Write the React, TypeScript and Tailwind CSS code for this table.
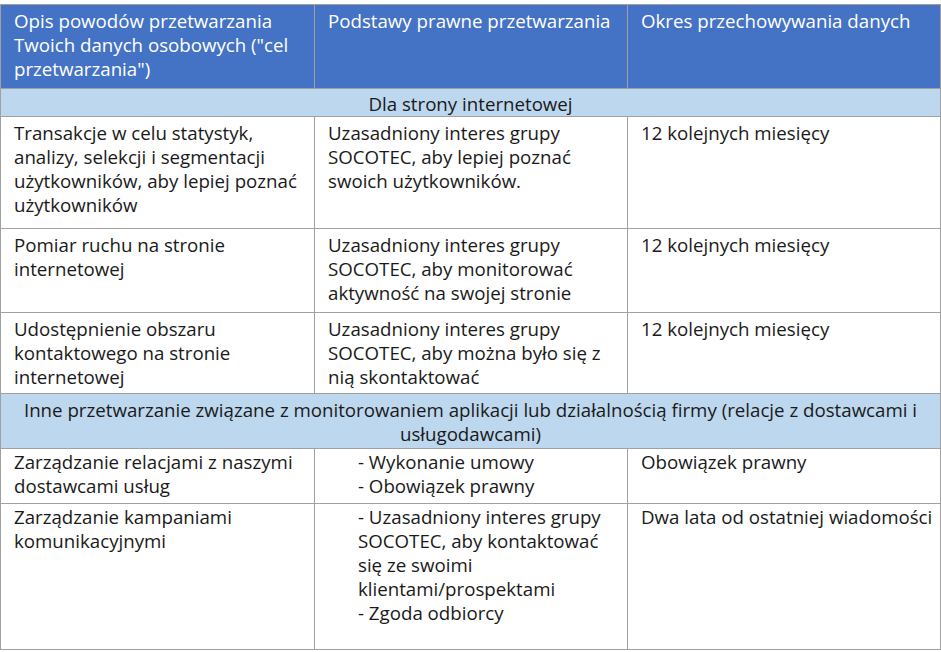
const rows = [
  {
    purpose: ["Transakcje w celu statystyk,", "analizy, selekcji i segmentacji", "użytkowników, aby lepiej poznać", "użytkowników"],
    basis: ["Uzasadniony interes grupy", "SOCOTEC, aby lepiej poznać", "swoich użytkowników."],
    period: ["12 kolejnych miesięcy"],
    h: "h-[112px]",
  },
  {
    purpose: ["Pomiar ruchu na stronie", "internetowej"],
    basis: ["Uzasadniony interes grupy", "SOCOTEC, aby monitorować", "aktywność na swojej stronie"],
    period: ["12 kolejnych miesięcy"],
    h: "h-[84px]",
  },
  {
    purpose: ["Udostępnienie obszaru", "kontaktowego na stronie", "internetowej"],
    basis: ["Uzasadniony interes grupy", "SOCOTEC, aby można było się z", "nią skontaktować"],
    period: ["12 kolejnych miesięcy"],
    h: "h-[81px]",
  },
];

const rows2 = [
  {
    purpose: ["Zarządzanie relacjami z naszymi", "dostawcami usług"],
    basis: ["- Wykonanie umowy", "- Obowiązek prawny"],
    period: ["Obowiązek prawny"],
    h: "h-[55px]",
  },
  {
    purpose: ["Zarządzanie kampaniami", "komunikacyjnymi"],
    basis: ["- Uzasadniony interes grupy", "SOCOTEC, aby kontaktować", "się ze swoimi", "klientami/prospektami", "- Zgoda odbiorcy"],
    period: ["Dwa lata od ostatniej wiadomości"],
    h: "h-[146px]",
  },
];

const Lines = ({ lines }: { lines: string[] }) => (
  <>
    {lines.map((l, i) => (
      <div key={i} className="whitespace-nowrap">{l}</div>
    ))}
  </>
);

const cell = "border border-[#a0a0a0] align-top px-[13px]";

const Row = ({ r, indent }: { r: typeof rows[number]; indent?: boolean }) => (
  <tr className={r.h}>
    <td className={`${cell} ${indent ? "pt-[1px]" : "pt-[4px]"}`}><Lines lines={r.purpose} /></td>
    <td className={`${cell} ${indent ? "pt-[1px] pl-[43px]" : "pt-[4px]"}`}><Lines lines={r.basis} /></td>
    <td className={`${cell} ${indent ? "pt-[1px]" : "pt-[4px]"}`}><Lines lines={r.period} /></td>
  </tr>
);

const App = () => {
  return (
    <div className="w-[941px] h-[652px] bg-white pt-[4px]" style={{ fontFamily: '"Open Sans", "Noto Sans", sans-serif' }}>
      <table className="w-[940px] border-collapse table-fixed text-[18.7px] leading-[24px] text-[#1a1a1a]">
        <colgroup>
          <col className="w-[314px]" />
          <col className="w-[313px]" />
          <col className="w-[313px]" />
        </colgroup>
        <tbody>
          <tr className="h-[84px] bg-[#4472c4] text-white">
            <td className={`${cell} pt-[4px]`}>
              <Lines lines={["Opis powodów przetwarzania", 'Twoich danych osobowych ("cel', 'przetwarzania")']} />
            </td>
            <td className={`${cell} pt-[4px]`}>Podstawy prawne przetwarzania</td>
            <td className={`${cell} pt-[4px]`}>Okres przechowywania danych</td>
          </tr>
          <tr className="h-[27px] bg-[#bdd7ee]">
            <td colSpan={3} className="border border-[#a0a0a0] text-center align-top pt-[3px]">
              Dla strony internetowej
            </td>
          </tr>
          {rows.map((r, i) => (
            <Row key={i} r={r} />
          ))}
          <tr className="h-[55px] bg-[#bdd7ee]">
            <td colSpan={3} className="border border-[#a0a0a0] text-center align-top pt-[4px] px-[8px] whitespace-nowrap">
              Inne przetwarzanie związane z monitorowaniem aplikacji lub działalnością firmy (relacje z dostawcami i
              <br />
              usługodawcami)
            </td>
          </tr>
          {rows2.map((r, i) => (
            <Row key={i} r={r} indent />
          ))}
        </tbody>
      </table>
    </div>
  );
};

export default App;
